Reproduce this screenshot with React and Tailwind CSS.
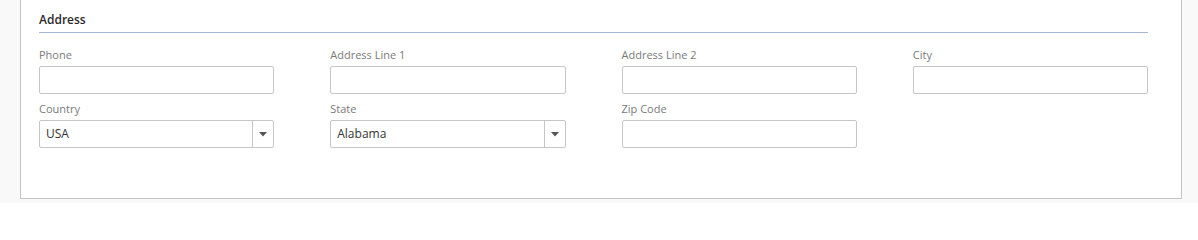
import { useState } from "react";

const fieldsTop = ["Phone", "Address Line 1", "Address Line 2", "City"];

// text input box
function TextField({ label }) {
  return (
    <div className="flex flex-col">
      <label className="h-[17px] leading-[17px] text-[11px] text-[#7a7a7a] mb-[3px]">{label}</label>
      <input className="h-[28px] w-full border border-[#c6c6c6] rounded-[2px] bg-white px-[6px] text-[12px] text-[#333] outline-none" />
    </div>
  );
}

// dropdown box
function SelectField({ label, value }) {
  return (
    <div className="flex flex-col">
      <label className="h-[17px] leading-[17px] text-[11px] text-[#7a7a7a] mb-[3px]">{label}</label>
      <div className="h-[28px] w-full flex border border-[#c6c6c6] rounded-[2px] bg-white">
        <div className="flex-1 flex items-center px-[6px] text-[12px] text-[#333]">{value}</div>
        <div className="w-[21px] flex items-center justify-center border-l border-[#c6c6c6]">
          <svg width="8" height="5" viewBox="0 0 8 5">
            <path d="M0 0 L8 0 L4 4.5 Z" fill="#555" />
          </svg>
        </div>
      </div>
    </div>
  );
}

export default function App() {
  const [country] = useState("USA");
  const [state] = useState("Alabama");

  return (
    <div className="h-[203px] bg-[#f9f9f9] font-['Open_Sans',sans-serif] pl-[20px] pr-[16px]">
      <div className="bg-white border-x border-b border-[#c4c4c4] h-[199px] pl-[18px] pr-[33px] pt-[10px]">
        <div className="h-[23px] border-b border-[#a7b8d4] text-[12px] font-semibold text-[#2b2b2b] leading-[19px]">
          Address
        </div>

        <div className="grid grid-cols-4 gap-x-[56px] gap-y-[6px] mt-[13px]">
          {fieldsTop.map((f) => (
            <TextField key={f} label={f} />
          ))}
          <SelectField label="Country" value={country} />
          <SelectField label="State" value={state} />
          <TextField label="Zip Code" />
        </div>
      </div>
    </div>
  );
}
